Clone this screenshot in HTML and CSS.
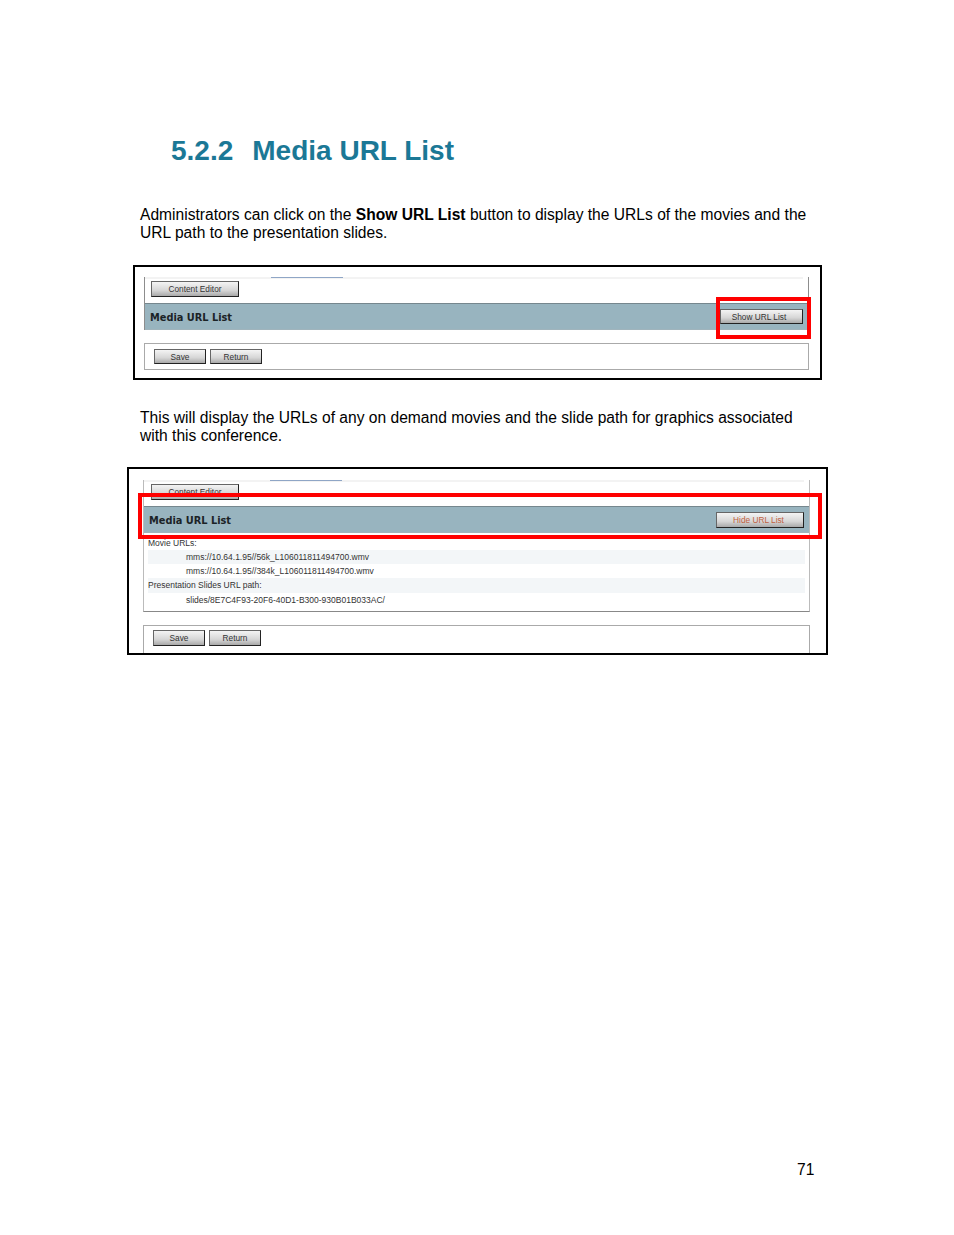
FILE: index.html
```html
<!DOCTYPE html>
<html lang="en">
<head>
  <meta charset="UTF-8" />
  <title>5.2.2 Media URL List</title>
  <link rel="stylesheet" href="styles.css">
</head>
<body>
  <div class="page">
    <h1 class="section-title"><span class="section-num">5.2.2</span><span>Media URL List</span></h1>

    <p class="intro">Administrators can click on the <b>Show URL List</b> button to display the URLs of the movies and the URL path to the presentation slides.</p>

    <div class="shot shot-show">
      <div class="panel">
        <div class="tab-strip"><span class="tab-line"></span></div>
        <div class="editor-row"><button class="btn btn-editor">Content Editor</button></div>
        <div class="bar">
          <span class="bar-title">Media URL List</span>
          <button class="btn btn-url">Show URL List</button>
        </div>
      </div>
      <div class="actions">
        <button class="btn btn-action">Save</button>
        <button class="btn btn-action">Return</button>
      </div>
      <div class="mark mark-show"></div>
    </div>

    <p class="intro intro-second">This will display the URLs of any on demand movies and the slide path for graphics associated with this conference.</p>

    <div class="shot shot-hide">
      <div class="panel panel-open">
        <div class="tab-strip"><span class="tab-line"></span></div>
        <div class="editor-row"><button class="btn btn-editor">Content Editor</button></div>
        <div class="bar">
          <span class="bar-title">Media URL List</span>
          <button class="btn btn-url btn-hide">Hide URL List</button>
        </div>
        <div class="url-list">
          <div class="url-label">Movie URLs:</div>
          <div class="url-row striped">mms://10.64.1.95//56k_L106011811494700.wmv</div>
          <div class="url-row">mms://10.64.1.95//384k_L106011811494700.wmv</div>
          <div class="url-label striped">Presentation Slides URL path:</div>
          <div class="url-row">slides/8E7C4F93-20F6-40D1-B300-930B01B033AC/</div>
        </div>
      </div>
      <div class="actions actions-open">
        <button class="btn btn-action">Save</button>
        <button class="btn btn-action">Return</button>
      </div>
      <div class="mark mark-hide"></div>
    </div>

    <div class="page-num">71</div>
  </div>
</body>
</html>
```

FILE: styles.css
```css
* {
  box-sizing: border-box;
  margin: 0;
  padding: 0;
}

body {
  font-family: "Liberation Sans", Arial, sans-serif;
  background-color: #fff;
  color: #000;
}

.page {
  height: 1235px;
  padding: 133px 0 0 140px;
  display: flex;
  flex-direction: column;
  overflow: hidden;
}

.section-title {
  display: flex;
  gap: 19px;
  margin-left: 31px;
  font-size: 28px;
  line-height: 36px;
  font-weight: 700;
  color: #1b7896;
}

.intro {
  width: 680px;
  margin-top: 37px;
  font-size: 15.6px;
  line-height: 18px;
}

.intro-second {
  margin-top: 29px;
}

/* Screenshots pasted into the manual */
.shot {
  position: relative;
  background: #fff;
  border: 2px solid #000;
}

.shot-show {
  width: 689px;
  height: 115px;
  margin: 23px 0 0 -7px;
  padding: 10px 11px 0 9px;
}

.shot-hide {
  width: 701px;
  height: 188px;
  margin: 22px 0 0 -13px;
  padding: 11px 16px 0 14px;
}

.panel {
  position: relative;
  border-left: 1px solid #8d8d8d;
  border-right: 1px solid #8d8d8d;
}

.panel-open {
  border-left-color: #bbb;
  border-right-color: #bbb;
  border-bottom: 1px solid #888;
}

.tab-strip {
  height: 2px;
  margin-right: 5px;
  background: #f3f3f3;
}

.tab-line {
  display: block;
  width: 72px;
  height: 1px;
  margin-left: 126px;
  background: #8fa6c6;
}

.editor-row {
  height: 24px;
  padding: 2px 0 0 6px;
}

.panel-open .editor-row {
  padding-left: 7px;
}

.btn {
  display: block;
  font-family: "Liberation Sans", Arial, sans-serif;
  font-size: 8.3px;
  color: #333;
  background: linear-gradient(#f4f4f4, #d6d6d6 60%, #a9a9a9);
  border: 1px solid #222;
  border-top-color: #666;
  border-left-color: #666;
}

.btn-editor {
  width: 88px;
  height: 16px;
}

.bar {
  height: 27px;
  padding: 0 5px;
  display: flex;
  align-items: center;
  justify-content: space-between;
  background: #98b4bf;
  border-top: 1px solid #76878e;
  border-bottom: 1px solid #a0b4bc;
}

.bar-title {
  padding-top: 1px;
  font-family: "DejaVu Sans", sans-serif;
  font-size: 9.8px;
  font-weight: 700;
  color: #1b2326;
}

.btn-url {
  width: 83px;
  height: 15px;
  padding-right: 5px;
}

.btn-hide {
  width: 88px;
  height: 16px;
  padding-right: 3px;
  color: #c0603e;
}

.url-list {
  padding: 3px 4px 4px;
  font-size: 8.5px;
  line-height: 14px;
  color: #333;
}

.striped {
  background: #f3f6f8;
}

.url-label {
  height: 14px;
}

.url-label.striped {
  height: 15px;
}

.url-row {
  height: 14px;
  padding-left: 38px;
}

.actions {
  display: flex;
  gap: 4px;
  height: 27px;
  margin-top: 13px;
  padding: 5px 0 0 9px;
  border: 1px solid #aaa;
}

.actions-open {
  height: 28px;
  padding-top: 4px;
  border-bottom: 0;
}

.btn-action {
  width: 52px;
  height: 15px;
}

.actions-open .btn-action {
  height: 16px;
}

/* Red call-outs drawn over the screenshots */
.mark {
  position: absolute;
  border: 4px solid #f00;
}

.mark-show {
  left: 581px;
  top: 30px;
  width: 95px;
  height: 42px;
}

.mark-hide {
  left: 9px;
  top: 24px;
  width: 684px;
  height: 46px;
}

.page-num {
  margin-top: auto;
  margin-bottom: 56px;
  margin-left: 657px;
  font-size: 15.6px;
  line-height: 18px;
}
```
